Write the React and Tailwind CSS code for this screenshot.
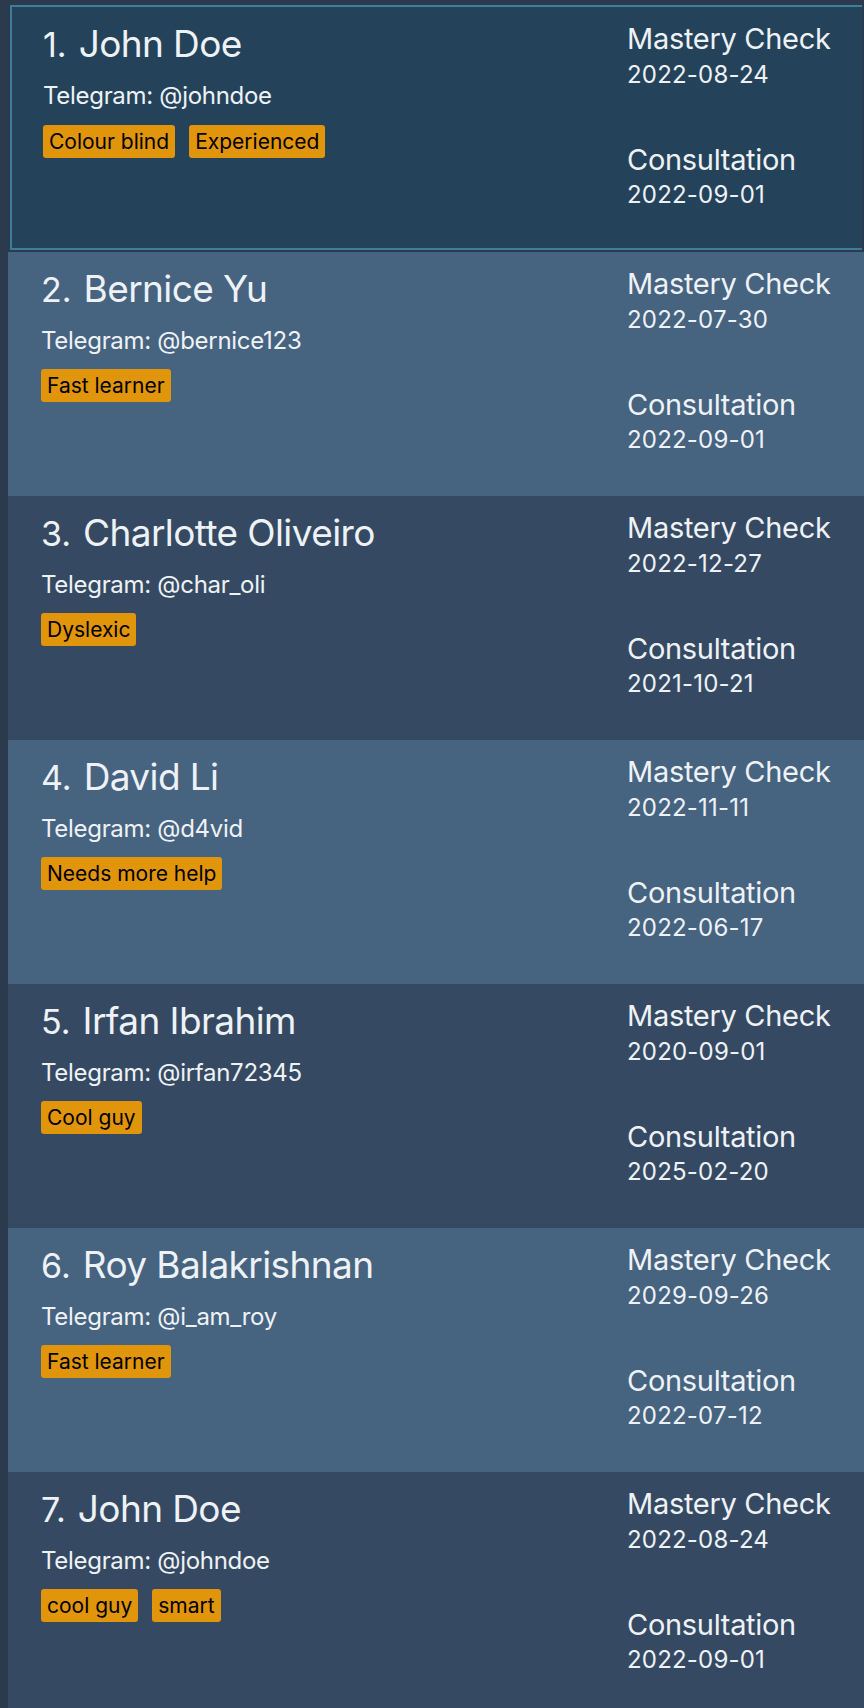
import React from "react";

const people = [
  { name: "John Doe", tg: "@johndoe", tags: ["Colour blind", "Experienced"], mastery: "2022-08-24", consult: "2022-09-01" },
  { name: "Bernice Yu", tg: "@bernice123", tags: ["Fast learner"], mastery: "2022-07-30", consult: "2022-09-01" },
  { name: "Charlotte Oliveiro", tg: "@char_oli", tags: ["Dyslexic"], mastery: "2022-12-27", consult: "2021-10-21" },
  { name: "David Li", tg: "@d4vid", tags: ["Needs more help"], mastery: "2022-11-11", consult: "2022-06-17" },
  { name: "Irfan Ibrahim", tg: "@irfan72345", tags: ["Cool guy"], mastery: "2020-09-01", consult: "2025-02-20" },
  { name: "Roy Balakrishnan", tg: "@i_am_roy", tags: ["Fast learner"], mastery: "2029-09-26", consult: "2022-07-12" },
  { name: "John Doe", tg: "@johndoe", tags: ["cool guy", "smart"], mastery: "2022-08-24", consult: "2022-09-01" },
];

const CardBody = ({ index, person, selected }) => {
  return (
    <div className="flex h-full">
      <div className={selected ? "flex-1 pl-[31px] pt-[18px]" : "flex-1 pl-[33px] pt-[18px]"}>
        <div className="flex items-baseline">
          <span className="pr-[12px] text-[34px] leading-none">{index}.</span>
          <span className="text-[37px] leading-none tracking-[-0.6px]">{person.name}</span>
        </div>
        <div className="mt-[22px] text-[24px] leading-none tracking-[-0.3px]">Telegram: {person.tg}</div>
        <div className={selected ? "mt-[17px] flex gap-[14px]" : "mt-[16px] flex gap-[14px]"}>
          {person.tags.map((t) => (
            <span key={t} className="h-[33px] rounded-[3px] bg-[#e0950a] px-[6px] text-[21px] leading-[33px] text-black">
              {t}
            </span>
          ))}
        </div>
      </div>
      <div className={selected ? "w-[235px] pt-[17px]" : "w-[237px] pt-[17px]"}>
        <div className="text-[29px] leading-none tracking-[-0.3px]">Mastery Check</div>
        <div className="mt-[10px] text-[24px] leading-none tracking-[0.2px]">{person.mastery}</div>
        <div className="mt-[58px] text-[29px] leading-none tracking-[-0.3px]">Consultation</div>
        <div className="mt-[9px] text-[24px] leading-none tracking-[0.2px]">{person.consult}</div>
      </div>
    </div>
  );
};

const App = () => {
  return (
    <div
      className="h-[1708px] overflow-hidden bg-[#2b3b4d] pl-[8px] pt-[3px] text-[#eef2f6]"
      style={{ fontFamily: "Inter, 'Noto Sans', sans-serif" }}
    >
      {people.map((p, i) =>
        i === 0 ? (
          <div key={i} className="h-[249px] p-[2px]">
            <div className="h-full border-2 border-r-0 border-[#3f7e9a] bg-[#24435a]">
              <CardBody index={i + 1} person={p} selected />
            </div>
          </div>
        ) : (
          <div key={i} className={i % 2 === 1 ? "h-[244px] bg-[#466380]" : "h-[244px] bg-[#354a62]"}>
            <CardBody index={i + 1} person={p} />
          </div>
        )
      )}
    </div>
  );
};

export default App;
